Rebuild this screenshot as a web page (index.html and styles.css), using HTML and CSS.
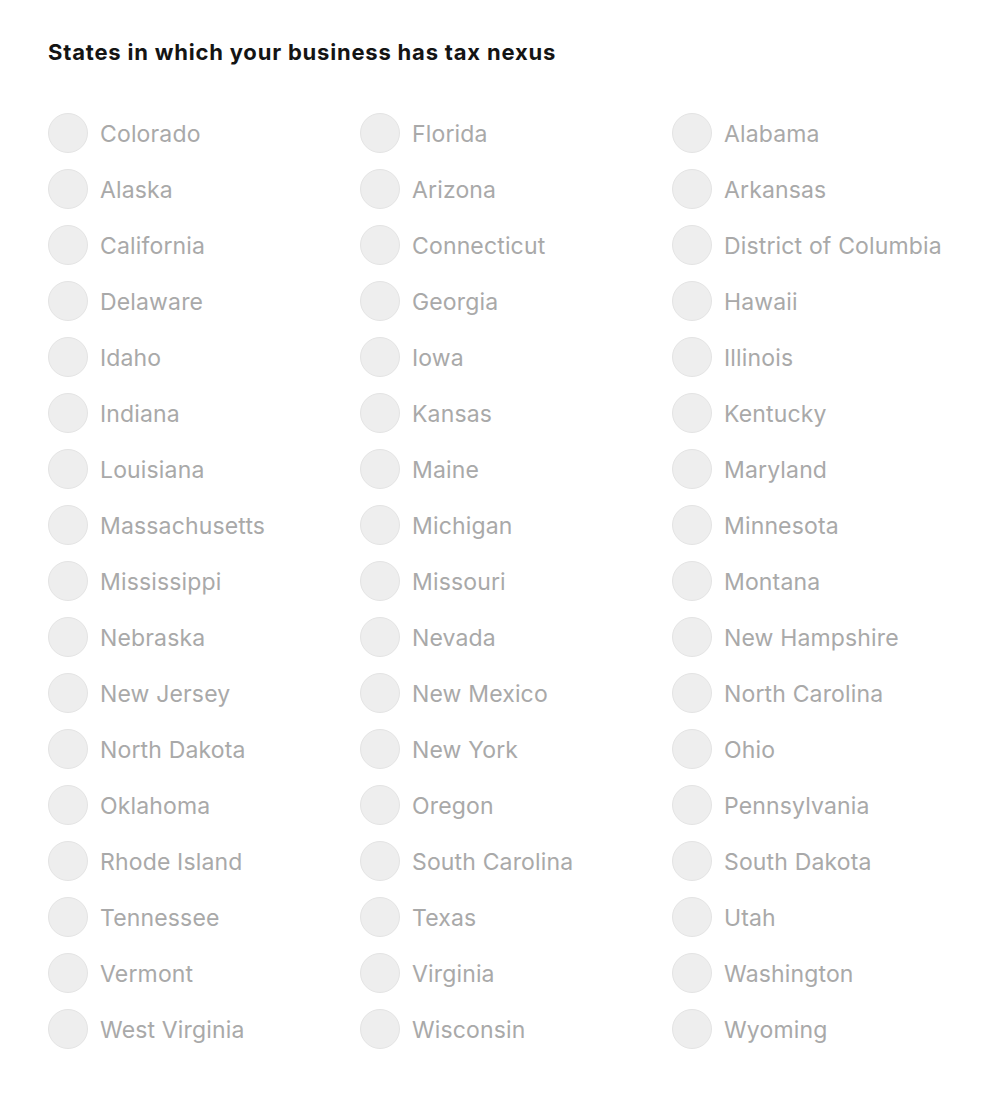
FILE: index.html
```html
<!DOCTYPE html>
<html>
<head>
<meta charset="utf-8">
<link rel="stylesheet" href="styles.css">
</head>
<body>
<div class="page">
  <h2 class="title">States in which your business has tax nexus</h2>
  <div class="grid">
    <label class="opt"><span class="dot"></span><span class="name">Colorado</span></label>
    <label class="opt"><span class="dot"></span><span class="name">Florida</span></label>
    <label class="opt"><span class="dot"></span><span class="name">Alabama</span></label>
    <label class="opt"><span class="dot"></span><span class="name">Alaska</span></label>
    <label class="opt"><span class="dot"></span><span class="name">Arizona</span></label>
    <label class="opt"><span class="dot"></span><span class="name">Arkansas</span></label>
    <label class="opt"><span class="dot"></span><span class="name">California</span></label>
    <label class="opt"><span class="dot"></span><span class="name">Connecticut</span></label>
    <label class="opt"><span class="dot"></span><span class="name">District of Columbia</span></label>
    <label class="opt"><span class="dot"></span><span class="name">Delaware</span></label>
    <label class="opt"><span class="dot"></span><span class="name">Georgia</span></label>
    <label class="opt"><span class="dot"></span><span class="name">Hawaii</span></label>
    <label class="opt"><span class="dot"></span><span class="name">Idaho</span></label>
    <label class="opt"><span class="dot"></span><span class="name">Iowa</span></label>
    <label class="opt"><span class="dot"></span><span class="name">Illinois</span></label>
    <label class="opt"><span class="dot"></span><span class="name">Indiana</span></label>
    <label class="opt"><span class="dot"></span><span class="name">Kansas</span></label>
    <label class="opt"><span class="dot"></span><span class="name">Kentucky</span></label>
    <label class="opt"><span class="dot"></span><span class="name">Louisiana</span></label>
    <label class="opt"><span class="dot"></span><span class="name">Maine</span></label>
    <label class="opt"><span class="dot"></span><span class="name">Maryland</span></label>
    <label class="opt"><span class="dot"></span><span class="name">Massachusetts</span></label>
    <label class="opt"><span class="dot"></span><span class="name">Michigan</span></label>
    <label class="opt"><span class="dot"></span><span class="name">Minnesota</span></label>
    <label class="opt"><span class="dot"></span><span class="name">Mississippi</span></label>
    <label class="opt"><span class="dot"></span><span class="name">Missouri</span></label>
    <label class="opt"><span class="dot"></span><span class="name">Montana</span></label>
    <label class="opt"><span class="dot"></span><span class="name">Nebraska</span></label>
    <label class="opt"><span class="dot"></span><span class="name">Nevada</span></label>
    <label class="opt"><span class="dot"></span><span class="name">New Hampshire</span></label>
    <label class="opt"><span class="dot"></span><span class="name">New Jersey</span></label>
    <label class="opt"><span class="dot"></span><span class="name">New Mexico</span></label>
    <label class="opt"><span class="dot"></span><span class="name">North Carolina</span></label>
    <label class="opt"><span class="dot"></span><span class="name">North Dakota</span></label>
    <label class="opt"><span class="dot"></span><span class="name">New York</span></label>
    <label class="opt"><span class="dot"></span><span class="name">Ohio</span></label>
    <label class="opt"><span class="dot"></span><span class="name">Oklahoma</span></label>
    <label class="opt"><span class="dot"></span><span class="name">Oregon</span></label>
    <label class="opt"><span class="dot"></span><span class="name">Pennsylvania</span></label>
    <label class="opt"><span class="dot"></span><span class="name">Rhode Island</span></label>
    <label class="opt"><span class="dot"></span><span class="name">South Carolina</span></label>
    <label class="opt"><span class="dot"></span><span class="name">South Dakota</span></label>
    <label class="opt"><span class="dot"></span><span class="name">Tennessee</span></label>
    <label class="opt"><span class="dot"></span><span class="name">Texas</span></label>
    <label class="opt"><span class="dot"></span><span class="name">Utah</span></label>
    <label class="opt"><span class="dot"></span><span class="name">Vermont</span></label>
    <label class="opt"><span class="dot"></span><span class="name">Virginia</span></label>
    <label class="opt"><span class="dot"></span><span class="name">Washington</span></label>
    <label class="opt"><span class="dot"></span><span class="name">West Virginia</span></label>
    <label class="opt"><span class="dot"></span><span class="name">Wisconsin</span></label>
    <label class="opt"><span class="dot"></span><span class="name">Wyoming</span></label>
  </div>
</div>
</body>
</html>
```

FILE: styles.css
```css
html, body {
  margin: 0;
  padding: 0;
  background: #ffffff;
}
.page {
  padding: 36px 48px 0 48px;
  font-family: "Inter", "Lato", sans-serif;
}
.title {
  margin: 0;
  font-size: 22px;
  line-height: 32px;
  font-weight: 700;
  letter-spacing: 0.8px;
  color: #141414;
}
.grid {
  margin-top: 45px;
  display: grid;
  grid-template-columns: 312px 312px 312px;
  grid-auto-rows: 56px;
}
.opt {
  display: flex;
  align-items: flex-start;
  gap: 12px;
}
.dot {
  width: 38px;
  height: 38px;
  border-radius: 50%;
  background: #eeeeee;
  border: 1px solid #e4e4e4;
  flex: none;
}
.name {
  padding-top: 1px;
  font-size: 23px;
  line-height: 40px;
  color: #a9a9a9;
  letter-spacing: 0.15px;
}
```
